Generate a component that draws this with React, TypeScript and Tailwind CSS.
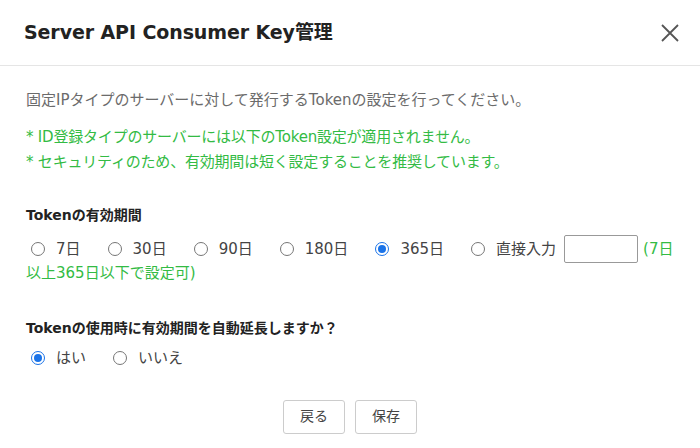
const font = { fontFamily: '"DejaVu Sans", "Noto Sans CJK JP", sans-serif' };

type RadioProps = { label: string; checked?: boolean; first?: boolean };

function Radio({ label, checked, first }: RadioProps) {
  return (
    <label
      className={`inline-flex items-center gap-[11px] align-middle text-[#444] mr-[27px] ${
        first ? 'ml-[5px]' : ''
      }`}
    >
      <span
        className={`w-[14px] h-[14px] rounded-full border flex items-center justify-center ${
          checked ? 'border-[#1a73e8] border-[1.5px]' : 'border-[#767676]'
        }`}
      >
        {checked && <span className="w-[8px] h-[8px] rounded-full bg-[#1a73e8]" />}
      </span>
      <span>{label}</span>
    </label>
  );
}

export default function App() {
  return (
    <div className="w-[700px] h-[448px] bg-white overflow-hidden" style={font}>
      <header className="h-[66px] flex items-center justify-between pl-[24px] pr-[20px] border-b border-[#e5e5e5]">
        <h1 className="text-[19px] font-bold text-[#222] tracking-[-0.1px]">Server API Consumer Key管理</h1>
        <svg width="20" height="20" viewBox="0 0 20 20" className="text-[#555]">
          <path d="M2 2 L18 18 M18 2 L2 18" stroke="currentColor" strokeWidth="1.8" />
        </svg>
      </header>

      <div className="px-[26px] pt-[24px]">
        <p className="text-[15px] text-[#6b6b6b] leading-[20px]">
          固定IPタイプのサーバーに対して発行するTokenの設定を行ってください。
        </p>
        <div className="mt-[15px] text-[15px] text-[#33bb44] leading-[25px] tracking-[-0.2px]">
          <p>* ID登録タイプのサーバーには以下のToken設定が適用されません。</p>
          <p>* セキュリティのため、有効期間は短く設定することを推奨しています。</p>
        </div>

        <h2 className="mt-[30px] text-[14px] font-bold text-[#222]">Tokenの有効期間</h2>
        <div className="mt-[10px] -mr-[8px] text-[15px] leading-[24px]">
          <Radio label="7日" first />
          <Radio label="30日" />
          <Radio label="90日" />
          <Radio label="180日" />
          <Radio label="365日" checked />
          <label className="inline-flex items-center gap-[11px] align-middle text-[#444]">
            <span className="w-[14px] h-[14px] rounded-full border border-[#767676]" />
            <span>直接入力</span>
          </label>
          <input
            type="text"
            className="ml-[8px] -my-[3px] w-[74px] h-[28px] align-middle border border-[#999] rounded-[2px] outline-none"
          />
          <span className="ml-[5px] align-middle text-[#33bb44]">(7日以上365日以下で設定可)</span>
        </div>

        <h2 className="mt-[33px] text-[14px] font-bold text-[#222]">Tokenの使用時に有効期間を自動延長しますか？</h2>
        <div className="mt-[6px] text-[15px] leading-[24px]">
          <Radio label="はい" checked first />
          <Radio label="いいえ" />
        </div>

        <div className="mt-[30px] flex justify-center gap-[10px]">
          <button className="w-[62px] h-[34px] border border-[#ccc] rounded-[3px] text-[14px] text-[#444] bg-white">
            戻る
          </button>
          <button className="w-[62px] h-[34px] border border-[#ccc] rounded-[3px] text-[14px] text-[#444] bg-white">
            保存
          </button>
        </div>
      </div>
    </div>
  );
}
